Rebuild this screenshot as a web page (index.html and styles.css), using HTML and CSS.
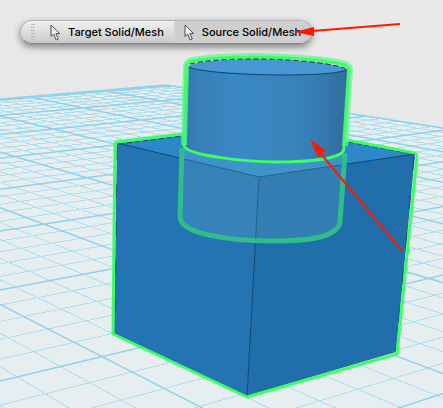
FILE: index.html
```
<!DOCTYPE html>
<html lang="en">
<head>
  <meta charset="UTF-8">
  <title>Solid/Mesh Subtract</title>
  <link rel="stylesheet" href="styles.css">
</head>
<body>
  <main class="scene">
    <svg class="view" viewBox="0 0 443 408" aria-hidden="true">
      <defs>
        <clipPath id="floor"><path d="M0 99 166 85 443 128V408H0Z"/></clipPath>
        <linearGradient id="side">
          <stop offset="0" stop-color="#3478ae"/>
          <stop offset=".12" stop-color="#3781b9"/>
          <stop offset=".35" stop-color="#3a89c3"/>
          <stop offset=".68" stop-color="#3883bc"/>
          <stop offset=".85" stop-color="#3479ae"/>
          <stop offset="1" stop-color="#306d9b"/>
        </linearGradient>
      </defs>

      <!-- floor -->
      <path d="M0 99 166 85 443 128V408H0Z" fill="#e6eef0"/>
      <g clip-path="url(#floor)" id="grid"></g>
      <path class="major" d="M0 99 166 85 443 128"/>

      <!-- box -->
      <path d="M117 143 264 125 415 154 259 177Z" fill="#2e87c9"/>
      <path d="M117 143 259 177 247 396 114 334Z" fill="#2474b4"/>
      <path d="M259 177 415 154 396 352 247 396Z" fill="#206eaa"/>
      <path class="edge" d="M117 143 259 177 415 154M259 177 247 396"/>
      <path class="dashes" d="M119 144 182 136M349 142 413 154"/>
      <path class="dashes faint" d="M117 146 115 330M414 157 396 350"/>
      <path class="outline" d="M183 134 117 142Q115 142 115 145L113 334 247 397 397 354 417 156Q417 154 415 153L347 140"/>

      <!-- hidden part of the cylinder -->
      <path d="M184 147 181 217C183 233 230 240 272 240S335 235 339 225L344 153C335 160 300 162 276 162S190 155 184 147Z" fill="#83c4d7" fill-opacity=".2"/>
      <path class="hidden" d="M182 148 180 217C180 234 230 241 272 241S338 236 340 222L345 153"/>

      <!-- cylinder -->
      <path d="M188 66 184 146C190 155 235 162 276 162S335 160 344 152L348 69Z" fill="url(#side)"/>
      <path d="M188 66C196 61 225 59 256 59S338 62 348 70C335 74 310 75 283 75S203 73 188 67Z" fill="#4697d2"/>
      <path class="edge" d="M188 67C203 73 256 75 283 75S335 74 347 70"/>
      <path class="glow" d="M184 145 186 65Q187 61 193 60C210 57 233 56 256 56S320 58 342 63Q350 65 350 69L345 146"/>
      <path class="outline" d="M184 146 186 67Q186 62 193 61C210 58 233 57 256 57S320 59 341 64Q349 66 349 70L344 147Q344 152 340 154C330 160 300 162 276 162S184 156 184 145"/>
      <path class="dashes" d="M190 64C205 60 230 59 256 59S332 62 346 69"/>

      <!-- pointer to the source body -->
      <path class="arrow-line" d="M402 251 321 154"/>
      <path class="arrow-head" d="M310 139 326 151 318 157Z"/>
    </svg>

    <div class="toolbar" role="toolbar" aria-label="Selection">
      <span class="grip"></span>
      <button class="tool" type="button">
        <svg class="cursor" viewBox="0 0 11 17" aria-hidden="true"><path d="M1 1V12.5L3.8 10.2 6.2 16 8.3 15 5.9 9.6H9.7Z"/></svg>
        Target Solid/Mesh
      </button>
      <button class="tool active" type="button">
        <svg class="cursor" viewBox="0 0 11 17" aria-hidden="true"><path d="M1 1V12.5L3.8 10.2 6.2 16 8.3 15 5.9 9.6H9.7Z"/></svg>
        Source Solid/Mesh
      </button>
    </div>

    <svg class="view notes" viewBox="0 0 443 408" aria-hidden="true">
      <path class="arrow-line" d="M400 24 312 31"/>
      <path class="arrow-head" d="M294 32 314 27V36Z"/>
    </svg>
  </main>

  <script>
    const grid = document.getElementById("grid");

    // every line runs from the left edge of the view to a vanishing point
    function family(vx, vy, near, step, from, to) {
      let minor = "", major = "";
      for (let i = from * 5; i <= to * 5; i++) {
        const depth = near + step * i / 5;
        if (depth <= 0) continue;
        const y = vy + 1 / depth;
        // stop at x = 450
        const endY = y + (vy - y) * 450 / vx;
        const d = `M0 ${y.toFixed(1)}L450 ${endY.toFixed(1)}`;
        if (i % 5 === 0) major += d;
        else minor += d;
      }
      return { minor, major };
    }

    const a = family(-700, -54, 0.00279, 0.00103, -1, 6);
    const b = family(1800, -50, 0.00232, 0.00062, -2, 7);
    grid.innerHTML = `<path class="minor" d="${a.minor}${b.minor}"/><path class="major" d="${a.major}${b.major}"/>`;
  </script>
</body>
</html>
```
FILE: styles.css
```
body {
  margin: 0;
  background: #e8e8e8;
  font-family: Inter, "Open Sans", sans-serif;
}
.scene {
  position: relative;
  overflow: hidden;
}
.view {
  display: block;
  width: 100%;
  fill: none;
}
.notes {
  position: absolute;
  top: 0;
  left: 0;
  pointer-events: none;
}

/* drawing */
.minor {
  stroke: #afdeef;
  stroke-width: 1;
  shape-rendering: crispEdges;
}
.major {
  stroke: #8fd1ec;
  stroke-width: 1.5;
}
.edge {
  stroke: #0d4570;
  stroke-width: 1;
}
.outline {
  stroke: #3dff62;
  stroke-width: 3;
  stroke-linejoin: round;
}
.glow {
  stroke: #62f594;
  stroke-opacity: 0.7;
  stroke-width: 6;
}
.hidden {
  stroke: #2fbd8c;
  stroke-width: 5;
}
.dashes {
  stroke: #0c3a34;
  stroke-dasharray: 5 3;
}
.faint {
  stroke-opacity: 0.6;
  stroke-dasharray: 14 24;
}
.arrow-line {
  stroke: #ff1800;
  stroke-width: 2;
}
.arrow-head {
  fill: #ff1800;
}

/* toolbar */
.toolbar {
  position: absolute;
  top: 20px;
  left: 20px;
  display: flex;
  height: 22px;
  overflow: hidden;
  border: 1px solid #b4b4b4;
  border-bottom-color: #858585;
  border-radius: 12px;
  background: linear-gradient(#f0f0f0, #cacaca);
  box-shadow: 0 3px 7px rgba(0, 0, 0, 0.45);
}
.grip {
  width: 4px;
  margin: 2px 5px 2px 10px;
  background: radial-gradient(circle, #bbb 30%, transparent 40%) 0 0 / 2px 3px;
}
.tool {
  display: flex;
  align-items: center;
  gap: 7px;
  padding: 0 10px;
  border: 0;
  background: none;
  color: #000;
  font-family: inherit;
  font-size: 11px;
  font-weight: 500;
  line-height: 22px;
  white-space: nowrap;
}
.tool.active {
  background: #cfcfcf;
}
.cursor {
  width: 11px;
  height: 17px;
  fill: #eee;
  stroke: #505050;
}
```
